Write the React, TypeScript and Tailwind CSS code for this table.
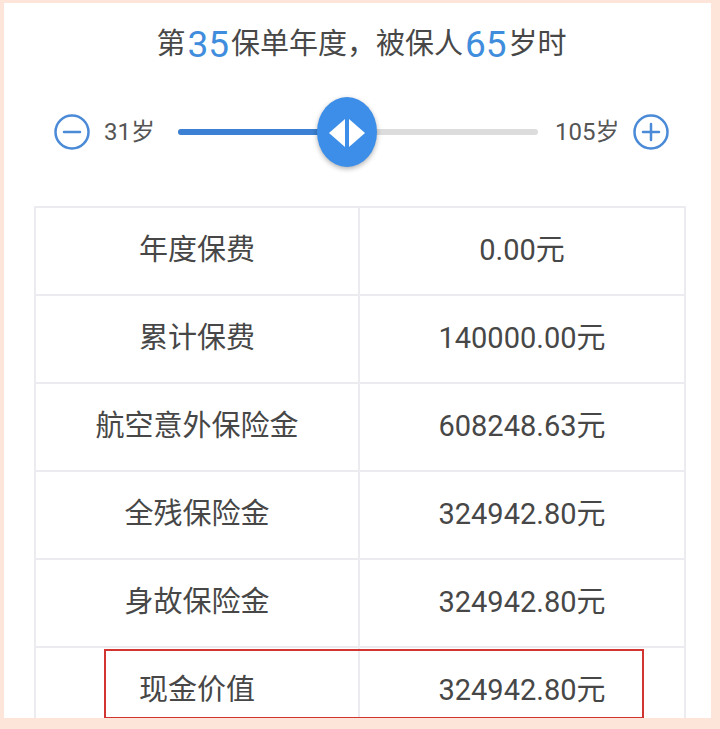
import React from "react";

const rows = [
  { label: "年度保费", value: "0.00元" },
  { label: "累计保费", value: "140000.00元" },
  { label: "航空意外保险金", value: "608248.63元" },
  { label: "全残保险金", value: "324942.80元" },
  { label: "身故保险金", value: "324942.80元" },
  { label: "现金价值", value: "324942.80元", highlight: true },
];

const font = { fontFamily: "Roboto, 'Noto Sans CJK SC', sans-serif" };

function RoundIcon({ plus }: { plus?: boolean }) {
  return (
    <svg width="38" height="38" viewBox="0 0 38 38" className="shrink-0">
      <circle cx="19" cy="19" r="16.5" fill="none" stroke="#4a8ad6" strokeWidth="2.5" />
      <line x1="11" y1="19" x2="27" y2="19" stroke="#4a8ad6" strokeWidth="2.5" strokeLinecap="round" />
      {plus && <line x1="19" y1="11" x2="19" y2="27" stroke="#4a8ad6" strokeWidth="2.5" strokeLinecap="round" />}
    </svg>
  );
}

export default function App() {
  const progress = 169;

  return (
    <div className="h-[729px] w-[720px] bg-[#fde6d9] pt-[3px] pl-[4px] pr-[9px]" style={font}>
      <div className="h-[715px] overflow-hidden bg-white pt-[22px]">
        {/* title */}
        <div className="flex h-[40px] items-center justify-center pl-[8px] text-[29px] text-[#484848]">
          <span>第</span>
          <span className="mx-[2px] text-[37px] text-[#3f8ddc]">35</span>
          <span>保单年度，被保人</span>
          <span className="mx-[2px] text-[37px] text-[#3f8ddc]">65</span>
          <span>岁时</span>
        </div>

        {/* slider */}
        <div className="mt-[32px] flex h-[70px] items-center pl-[49px]">
          <RoundIcon />
          <span className="ml-[13px] w-[60px] text-[24px] text-[#555]">31岁</span>
          <div className="relative ml-[14px] h-[6px] w-[360px] rounded-full bg-[#dcdcdc]">
            <div className="h-full rounded-full bg-[#3b80d2]" style={{ width: progress }} />
            <div
              className="absolute top-1/2 h-[70px] w-[60px] -translate-x-1/2 -translate-y-1/2 rounded-[50%] bg-[#3d8ee8] shadow-[0_2px_5px_rgba(0,0,0,0.3)]"
              style={{ left: progress }}
            >
              <svg width="60" height="70" viewBox="0 0 60 70">
                <polygon points="12,36 28,22 28,50" fill="#fff" />
                <polygon points="32,22 32,50 48,36" fill="#fff" />
              </svg>
            </div>
          </div>
          <span className="ml-[17px] w-[77px] text-[24px] text-[#555]">105岁</span>
          <RoundIcon plus />
        </div>

        {/* table */}
        <div className="mt-[39px] ml-[30px] w-[652px] border-2 border-b-0 border-[#ececf0]">
          {rows.map((r) => (
            <div key={r.label} className="relative grid h-[88px] grid-cols-2 border-b-2 border-[#ececf0] text-[29px] text-[#474747]">
              <div className="flex items-center justify-center border-r-2 border-[#ececf0]">{r.label}</div>
              <div className="flex items-center justify-center">{r.value}</div>
              {r.highlight && (
                <div className="absolute left-[68px] top-[1px] h-[70px] w-[540px] border-2 border-[#d23431]" />
              )}
            </div>
          ))}
        </div>
      </div>
    </div>
  );
}
